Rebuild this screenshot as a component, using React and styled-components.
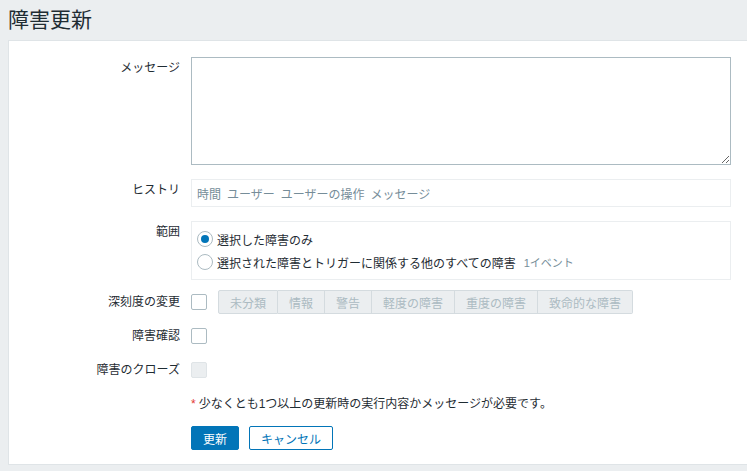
import React from "react";
import styled, { createGlobalStyle } from "styled-components";

const GlobalStyle = createGlobalStyle`
  html, body {
    margin: 0;
    padding: 0;
    background: #ebeef0;
    overflow: hidden;
  }
  body {
    font-family: Arial, "Liberation Sans", "Noto Sans CJK JP", sans-serif;
    font-size: 12px;
    color: #1f2c33;
  }
`;

const Page = styled.div`
  padding-left: 8px;
  width: 770px;
`;

const Header = styled.header`
  height: 40px;
  display: flex;
  align-items: center;
`;

const Title = styled.h1`
  margin: 0;
  font-size: 21px;
  font-weight: normal;
  line-height: 24px;
  color: #1f2c33;
`;

const Panel = styled.div`
  background: #fff;
  border: 1px solid #dfe4e7;
  padding: 16px 0 14px;
`;

const Row = styled.div`
  display: grid;
  grid-template-columns: 171px 540px;
  column-gap: 11px;
  margin-top: ${(p) => p.$gap || 0}px;
  min-height: ${(p) => (p.$compact ? 24 : 0)}px;
  align-items: ${(p) => (p.$center ? "center" : "start")};
`;

const Label = styled.label`
  text-align: right;
  line-height: 14px;
  padding-top: ${(p) => (p.$center ? 0 : 4)}px;
  white-space: nowrap;
`;

const Field = styled.div`
  display: flex;
  align-items: center;
  gap: 11px;
`;

const TextArea = styled.textarea`
  box-sizing: border-box;
  width: 540px;
  height: 108px;
  margin: 0;
  border: 1px solid #acbbc2;
  border-radius: 0;
  background: #fff;
  font: inherit;
  padding: 4px 5px;
  display: block;
  outline: none;
`;

const Box = styled.div`
  box-sizing: border-box;
  width: 540px;
  border: 1px solid #ebeef0;
  padding: ${(p) => p.$pad || "0 5px"};
`;

const HistoryHead = styled.div`
  display: flex;
  gap: 6px;
  height: 26px;
  align-items: center;
  color: #768d99;
`;

const RadioList = styled.div`
  display: flex;
  flex-direction: column;
  gap: 3px;
`;

const RadioItem = styled.label`
  display: flex;
  align-items: center;
  gap: 4px;
  height: 20px;
`;

const RadioMark = styled.span`
  box-sizing: border-box;
  width: 16px;
  height: 16px;
  border-radius: 50%;
  border: 1px solid #acbbc2;
  background: #fff;
  display: flex;
  align-items: center;
  justify-content: center;
  &::after {
    content: "";
    width: 8px;
    height: 8px;
    border-radius: 50%;
    background: ${(p) => (p.$checked ? "#0275b8" : "transparent")};
  }
`;

const Hint = styled.span`
  color: #768d99;
  font-size: 11px;
  margin-left: 4px;
`;

const Check = styled.span`
  box-sizing: border-box;
  display: block;
  width: 16px;
  height: 16px;
  border-radius: 2px;
  border: 1px solid ${(p) => (p.$disabled ? "#dfe4e7" : "#acbbc2")};
  background: ${(p) => (p.$disabled ? "#ebeef0" : "#fff")};
`;

const SegGroup = styled.div`
  display: flex;
  height: 24px;
`;

const Seg = styled.span`
  box-sizing: border-box;
  height: 24px;
  display: flex;
  align-items: center;
  padding: 0 11px;
  background: #ebeef0;
  border: 1px solid #d4dbdf;
  color: #acbbc2;
  & + & {
    border-left: none;
  }
  &:first-child {
    border-radius: 2px 0 0 2px;
  }
  &:last-child {
    border-radius: 0 2px 2px 0;
  }
`;

const Note = styled.div`
  line-height: 14px;
  color: #1f2c33;
`;

const Star = styled.span`
  color: #e33734;
  margin-right: 3px;
`;

const Buttons = styled.div`
  display: flex;
  gap: 10px;
`;

const Button = styled.button`
  box-sizing: border-box;
  height: 24px;
  padding: 0 11px;
  border-radius: 2px;
  border: 1px solid #0275b8;
  background: ${(p) => (p.$primary ? "#0275b8" : "#fff")};
  color: ${(p) => (p.$primary ? "#fff" : "#0275b8")};
  font: inherit;
  cursor: pointer;
`;

const severities = ["未分類", "情報", "警告", "軽度の障害", "重度の障害", "致命的な障害"];
const historyCols = ["時間", "ユーザー", "ユーザーの操作", "メッセージ"];

export default function App() {
  return (
    <>
      <GlobalStyle />
      <Page>
        <Header>
          <Title>障害更新</Title>
        </Header>
        <Panel>
          <Row>
            <Label>メッセージ</Label>
            <TextArea />
          </Row>
          <Row $gap={14}>
            <Label>ヒストリ</Label>
            <Box>
              <HistoryHead>
                {historyCols.map((c) => (
                  <span key={c}>{c}</span>
                ))}
              </HistoryHead>
            </Box>
          </Row>
          <Row $gap={14}>
            <Label>範囲</Label>
            <Box $pad="7px 5px">
              <RadioList>
                <RadioItem>
                  <RadioMark $checked />
                  選択した障害のみ
                </RadioItem>
                <RadioItem>
                  <RadioMark />
                  選択された障害とトリガーに関係する他のすべての障害
                  <Hint>1イベント</Hint>
                </RadioItem>
              </RadioList>
            </Box>
          </Row>
          <Row $gap={10} $compact $center>
            <Label $center>深刻度の変更</Label>
            <Field>
              <Check />
              <SegGroup>
                {severities.map((s) => (
                  <Seg key={s}>{s}</Seg>
                ))}
              </SegGroup>
            </Field>
          </Row>
          <Row $gap={10} $compact $center>
            <Label $center>障害確認</Label>
            <Field>
              <Check />
            </Field>
          </Row>
          <Row $gap={10} $compact $center>
            <Label $center>障害のクローズ</Label>
            <Field>
              <Check $disabled />
            </Field>
          </Row>
          <Row $gap={10} $compact $center>
            <span />
            <Note>
              <Star>*</Star>少なくとも1つ以上の更新時の実行内容かメッセージが必要です。
            </Note>
          </Row>
          <Row $gap={10} $compact $center>
            <span />
            <Buttons>
              <Button $primary>更新</Button>
              <Button>キャンセル</Button>
            </Buttons>
          </Row>
        </Panel>
      </Page>
    </>
  );
}
